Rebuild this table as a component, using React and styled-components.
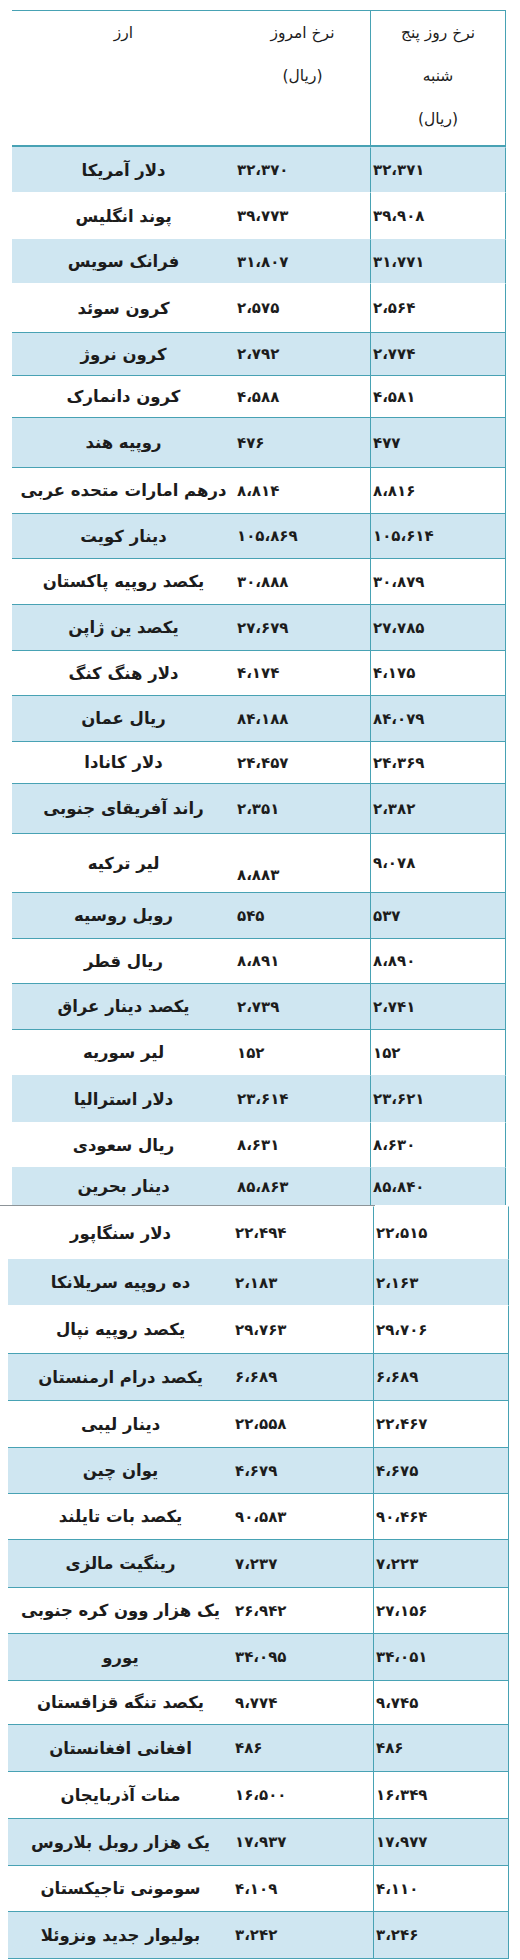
import React from 'react';
import styled, { createGlobalStyle } from 'styled-components';

const GlobalStyle = createGlobalStyle`
  body {
    margin: 0;
    background: #fff;
    font-family: "DejaVu Sans", sans-serif;
    color: #1c1c1c;
  }
`;

const LINE = '#48a2b4';
const STRIPE = '#cfe6f1';

const Page = styled.div`
  width: 520px;
  padding-top: 10px;
`;

const Table = styled.div`
  display: grid;
  grid-template-columns: ${(p) => p.$cols};
  margin-left: ${(p) => p.$left}px;
  width: ${(p) => p.$width}px;
`;

const HeadCell = styled.div`
  direction: rtl;
  text-align: center;
  font-size: 15.5px;
  line-height: 43px;
  height: 133px;
  padding-top: 1px;
  border-top: 1px solid ${LINE};
  border-bottom: 2px solid ${LINE};
  ${(p) => p.$last && `
    border-left: 1px solid ${LINE};
    border-right: 1px solid ${LINE};
  `}
`;

const Cell = styled.div`
  direction: rtl;
  display: flex;
  align-items: ${(p) => (p.$low ? 'flex-end' : 'center')};
  justify-content: ${(p) => (p.$center ? 'center' : 'flex-end')};
  height: ${(p) => p.$h}px;
  box-sizing: border-box;
  padding: ${(p) => (p.$low ? '0 2px 8px' : '0 2px')};
  font-size: 15px;
  font-weight: bold;
  background: ${(p) => (p.$blue ? STRIPE : '#fff')};
  border-top: 1px solid ${(p) => (p.$ruled ? LINE : 'transparent')};
  border-bottom: ${(p) => (p.$closed ? `1px solid ${LINE}` : 'none')};
  ${(p) => p.$last && `
    border-left: 1px solid ${LINE};
    border-right: 1px solid ${LINE};
  `}
`;

const Name = styled.span`
  white-space: nowrap;
  font-size: 16.5px;
`;

const Num = styled.span`
  direction: ltr;
  unicode-bidi: isolate;
`;

const Break = styled.div`
  width: 375px;
  height: 1px;
  background: #8d9498;
`;

const first = [
  ['دلار آمریکا', '۳۲،۳۷۰', '۳۲،۳۷۱', 45, 0],
  ['پوند انگلیس', '۳۹،۷۷۳', '۳۹،۹۰۸', 47, 0],
  ['فرانک سویس', '۳۱،۸۰۷', '۳۱،۷۷۱', 44, 0],
  ['کرون سوئد', '۲،۵۷۵', '۲،۵۶۴', 49, 0],
  ['کرون نروژ', '۲،۷۹۲', '۲،۷۷۴', 43, 1],
  ['کرون دانمارک', '۴،۵۸۸', '۴،۵۸۱', 42, 1],
  ['روپیه هند', '۴۷۶', '۴۷۷', 50, 1],
  ['درهم امارات متحده عربی', '۸،۸۱۴', '۸،۸۱۶', 46, 1],
  ['دینار کویت', '۱۰۵،۸۶۹', '۱۰۵،۶۱۴', 45, 1],
  ['یکصد روپیه پاکستان', '۳۰،۸۸۸', '۳۰،۸۷۹', 46, 1],
  ['یکصد ین ژاپن', '۲۷،۶۷۹', '۲۷،۷۸۵', 46, 1],
  ['دلار هنگ کنگ', '۴،۱۷۴', '۴،۱۷۵', 45, 1],
  ['ریال عمان', '۸۴،۱۸۸', '۸۴،۰۷۹', 46, 1],
  ['دلار کانادا', '۲۴،۴۵۷', '۲۴،۳۶۹', 42, 1],
  ['راند آفریقای جنوبی', '۲،۳۵۱', '۲،۳۸۲', 50, 1],
  ['لیر ترکیه', '۸،۸۸۳', '۹،۰۷۸', 59, 1, true],
  ['روبل روسیه', '۵۴۵', '۵۳۷', 46, 1],
  ['ریال قطر', '۸،۸۹۱', '۸،۸۹۰', 45, 1],
  ['یکصد دینار عراق', '۲،۷۳۹', '۲،۷۴۱', 46, 1],
  ['لیر سوریه', '۱۵۲', '۱۵۲', 46, 1],
  ['دلار استرالیا', '۲۳،۶۱۴', '۲۳،۶۲۱', 47, 0],
  ['ریال سعودی', '۸،۶۳۱', '۸،۶۳۰', 45, 0],
  ['دینار بحرین', '۸۵،۸۶۳', '۸۵،۸۴۰', 38, 0],
];

const second = [
  ['دلار سنگاپور', '۲۲،۴۹۴', '۲۲،۵۱۵', 53, 0],
  ['ده روپیه سریلانکا', '۲،۱۸۳', '۲،۱۶۳', 46, 0],
  ['یکصد روپیه نپال', '۲۹،۷۶۳', '۲۹،۷۰۶', 48, 0],
  ['یکصد درام ارمنستان', '۶،۶۸۹', '۶،۶۸۹', 47, 1],
  ['دینار لیبی', '۲۲،۵۵۸', '۲۲،۴۶۷', 47, 1],
  ['یوان چین', '۴،۶۷۹', '۴،۶۷۵', 46, 1],
  ['یکصد بات تایلند', '۹۰،۵۸۳', '۹۰،۴۶۴', 46, 1],
  ['رینگیت مالزی', '۷،۲۳۷', '۷،۲۲۳', 48, 1],
  ['یک هزار وون کره جنوبی', '۲۶،۹۴۲', '۲۷،۱۵۶', 46, 1],
  ['یورو', '۳۴،۰۹۵', '۳۴،۰۵۱', 47, 1],
  ['یکصد تنگه قزاقستان', '۹،۷۷۴', '۹،۷۴۵', 44, 1],
  ['افغانی افغانستان', '۴۸۶', '۴۸۶', 47, 1],
  ['منات آذربایجان', '۱۶،۵۰۰', '۱۶،۳۴۹', 47, 1],
  ['یک هزار روبل بلاروس', '۱۷،۹۳۷', '۱۷،۹۷۷', 47, 1],
  ['سومونی تاجیکستان', '۴،۱۰۹', '۴،۱۱۰', 46, 1],
  ['بولیوار جدید ونزوئلا', '۳،۲۴۲', '۳،۲۴۶', 47, 1],
];

const Rows = ({ data, blueOdd, closed }) =>
  data.map(([name, today, thu, h, ruled, low], i) => {
    const blue = blueOdd ? i % 2 === 0 : i % 2 === 1;
    const lastRow = closed && i === data.length - 1;
    const cellProps = {
      $h: h + (lastRow ? 1 : 0),
      $blue: blue,
      $ruled: !!ruled,
      $closed: lastRow,
    };
    return (
      <React.Fragment key={name}>
        <Cell {...cellProps} $center>
          <Name>{name}</Name>
        </Cell>
        <Cell {...cellProps} $low={low}>
          <Num>{today}</Num>
        </Cell>
        <Cell {...cellProps} $last>
          <Num>{thu}</Num>
        </Cell>
      </React.Fragment>
    );
  });

export default function App() {
  return (
    <Page>
      <GlobalStyle />
      <Table $left={12} $width={494} $cols="223px 135px 136px">
        <HeadCell>ارز</HeadCell>
        <HeadCell>
          نرخ امروز
          <br />
          (ریال)
        </HeadCell>
        <HeadCell $last>
          نرخ روز پنج
          <br />
          شنبه
          <br />
          (ریال)
        </HeadCell>
        <Rows data={first} blueOdd />
      </Table>
      <Break />
      <Table $left={8} $width={501} $cols="225px 140px 136px">
        <Rows data={second} closed />
      </Table>
    </Page>
  );
}
